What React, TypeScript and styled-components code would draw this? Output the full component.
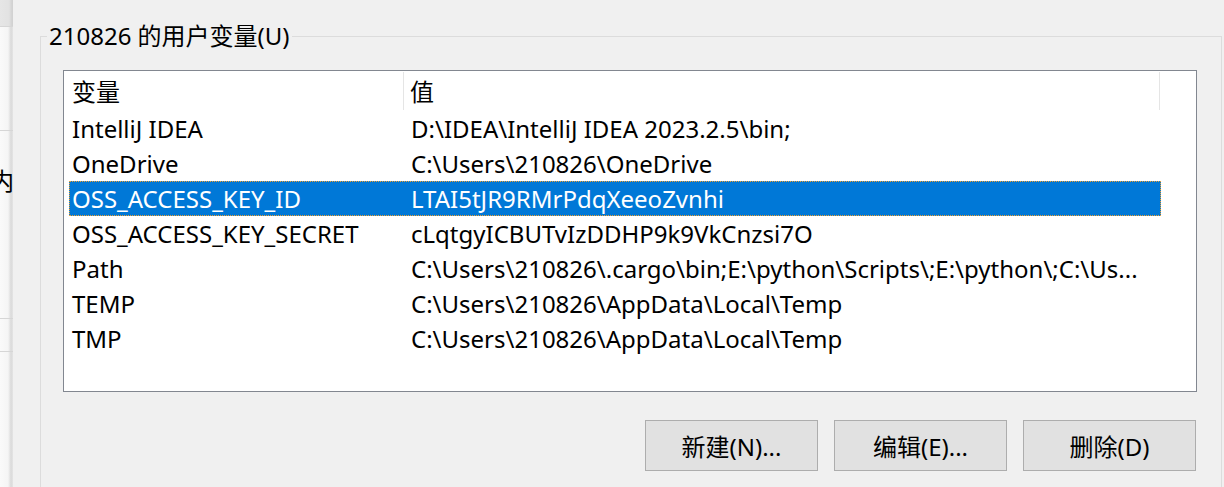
import React from "react";
import styled, { createGlobalStyle } from "styled-components";

type EnvVar = {
  name: string;
  value: string;
};

const userVars: EnvVar[] = [
  { name: "IntelliJ IDEA", value: "D:\\IDEA\\IntelliJ IDEA 2023.2.5\\bin;" },
  { name: "OneDrive", value: "C:\\Users\\210826\\OneDrive" },
  { name: "OSS_ACCESS_KEY_ID", value: "LTAI5tJR9RMrPdqXeeoZvnhi" },
  { name: "OSS_ACCESS_KEY_SECRET", value: "cLqtgyICBUTvIzDDHP9k9VkCnzsi7O" },
  {
    name: "Path",
    value: "C:\\Users\\210826\\.cargo\\bin;E:\\python\\Scripts\\;E:\\python\\;C:\\Us...",
  },
  { name: "TEMP", value: "C:\\Users\\210826\\AppData\\Local\\Temp" },
  { name: "TMP", value: "C:\\Users\\210826\\AppData\\Local\\Temp" },
];

const SELECTED = 2;

const App = () => {
  return (
    <Page>
      <GlobalStyle />
      {/* 뒤쪽 창 가장자리 */}
      <BackStrip>
        <StripCell $h={26} $top />
        <StripCell $h={103} />
        <StripCell $h={187}>
          <CutGlyph>内</CutGlyph>
        </StripCell>
        <StripCell $h={32} />
      </BackStrip>

      <Main>
        <Group>
          <Legend>210826 的用户变量(U)</Legend>
          <ListBox>
            <Header>
              <HeadCell $w={340}>变量</HeadCell>
              <HeadCell $w={756}>值</HeadCell>
            </Header>
            {userVars.map((v, i) => (
              <Row key={v.name} $selected={i === SELECTED}>
                <NameCell>{v.name}</NameCell>
                <ValueCell>{v.value}</ValueCell>
              </Row>
            ))}
          </ListBox>
          <ButtonBar>
            <Button>新建(N)...</Button>
            <Button>编辑(E)...</Button>
            <Button>删除(D)</Button>
          </ButtonBar>
        </Group>
      </Main>
    </Page>
  );
};

const GlobalStyle = createGlobalStyle`
  html, body {
    margin: 0;
    padding: 0;
    background: #f0f0f0;
    overflow: hidden;
  }
  body {
    font-family: "Noto Sans", "Noto Sans CJK SC", sans-serif;
    font-size: 24px;
    color: #000;
  }
`;

const Page = styled.div`
  display: flex;
  width: 1224px;
  height: 487px;
  overflow: hidden;
`;

const BackStrip = styled.div`
  width: 13px;
  flex-shrink: 0;
  display: flex;
  flex-direction: column;
  background: linear-gradient(to right, #fafafa 0, #f5f5f5 8px, #dadada 11px, #e4e4e4 13px);
`;

const StripCell = styled.div<{ $h: number; $top?: boolean }>`
  height: ${(p) => p.$h}px;
  flex-shrink: 0;
  border-bottom: 1px solid #d6d6d6;
  overflow: hidden;
  background: ${(p) =>
    p.$top ? "linear-gradient(to right, #e6e6e6 0, #e2e2e2 9px, #d2d2d2 12px)" : "transparent"};
`;

const CutGlyph = styled.div`
  margin: 36px 0 0 -10px;
  font-family: "Noto Sans CJK SC", sans-serif;
  font-size: 24px;
  line-height: 26px;
`;

const Main = styled.div`
  flex: 1;
  padding: 20px 2px 0 27px;
`;

const Group = styled.fieldset`
  margin: 0;
  padding: 18px 0 0 0;
  border: 1px solid #dcdcdc;
  height: 520px;
  box-sizing: border-box;
`;

const Legend = styled.legend`
  margin-left: 6px;
  padding: 0 2px;
  line-height: 32px;
  font-size: 24px;
`;

const ListBox = styled.div`
  margin: 0 24px 0 22px;
  height: 322px;
  box-sizing: border-box;
  border: 1px solid #828790;
  background: #fff;
  overflow: hidden;
`;

const Header = styled.div`
  display: flex;
  height: 40px;
`;

const HeadCell = styled.div<{ $w: number }>`
  width: ${(p) => p.$w}px;
  box-sizing: border-box;
  padding: 1px 0 0 8px;
  line-height: 38px;
  border-right: 1px solid #e5e5e5;
  margin-top: 1px;
  height: 38px;
  & + & {
    padding-left: 6px;
  }
`;

const Row = styled.div<{ $selected?: boolean }>`
  display: flex;
  margin-left: 5px;
  width: 1092px;
  height: 35px;
  box-sizing: border-box;
  line-height: 33px;
  white-space: nowrap;
  border: 1px ${(p) => (p.$selected ? "dotted #f0a030" : "solid transparent")};
  background: ${(p) => (p.$selected ? "#0078d7" : "transparent")};
  color: ${(p) => (p.$selected ? "#fff" : "#000")};
`;

const NameCell = styled.div`
  width: 334px;
  padding-left: 2px;
  box-sizing: border-box;
  overflow: hidden;
`;

const ValueCell = styled.div`
  flex: 1;
  padding-left: 7px;
  overflow: hidden;
`;

const ButtonBar = styled.div`
  display: flex;
  justify-content: flex-end;
  gap: 16px;
  margin: 28px 25px 0 0;
`;

const Button = styled.button`
  width: 173px;
  height: 51px;
  background: #e1e1e1;
  border: 1px solid #adadad;
  border-radius: 0;
  font-family: "Noto Sans", "Noto Sans CJK SC", sans-serif;
  font-size: 24px;
  color: #000;
  padding: 0;
`;

export default App;
